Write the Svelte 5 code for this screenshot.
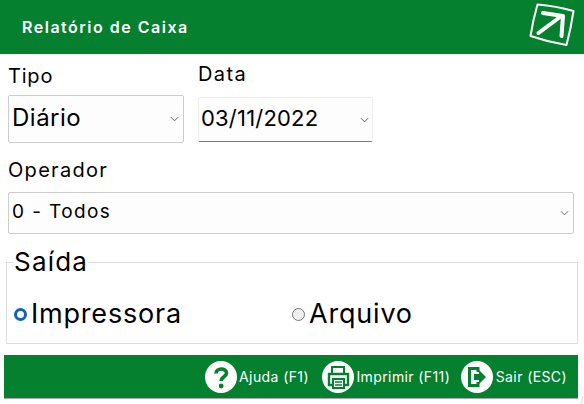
<script lang="ts">
	let tipo = $state("Diário");
	let saida = $state("impressora");
	const actions = [
		{ id: "help", label: "Ajuda (F1)" },
		{ id: "print", label: "Imprimir (F11)" },
		{ id: "exit", label: "Sair (ESC)" }
	];
</script>

<div class="page">
	<header class="topbar">
		<h1>Relatório de Caixa</h1>
		<svg class="logo" viewBox="529 3 46 46" width="46" height="46" aria-hidden="true">
			<path d="M537.5 4.5 Q556 6 573.5 11 Q571 28 566.5 45 Q548 42 530.5 36 Q533 20 537.5 4.5 Z" fill="none" stroke="#fff" stroke-width="2" stroke-linejoin="round" />
			<path d="M538.5 33 L560 17 M543 13 L563 16 L561.5 36" fill="none" stroke="#fff" stroke-width="4" stroke-linecap="round" stroke-linejoin="round" />
		</svg>
	</header>

	<div class="row">
		<div class="field tipo">
			<span class="label">Tipo</span>
			<div class="select big">
				<span>{tipo}</span>
				<svg class="chev" viewBox="0 0 10 6" width="9" height="6"><path d="M1 1 L5 5 L9 1" fill="none" stroke="#555" stroke-width="1" /></svg>
			</div>
		</div>
		<div class="field data">
			<span class="label">Data</span>
			<div class="select date">
				<span>03/11/2022</span>
				<svg class="chev" viewBox="0 0 10 6" width="9" height="6"><path d="M1 1 L5 5 L9 1" fill="none" stroke="#555" stroke-width="1" /></svg>
			</div>
		</div>
	</div>

	<div class="field operador">
		<span class="label">Operador</span>
		<div class="select wide">
			<span>0 - Todos</span>
			<svg class="chev" viewBox="0 0 10 6" width="9" height="6"><path d="M1 1 L5 5 L9 1" fill="none" stroke="#555" stroke-width="1" /></svg>
		</div>
	</div>

	<fieldset class="saida">
		<legend>Saída</legend>
		<div class="radios">
			<label class="radio">
				<span class="dot" class:on={saida === "impressora"}></span>Impressora
			</label>
			<label class="radio">
				<span class="dot" class:on={saida === "arquivo"}></span>Arquivo
			</label>
		</div>
	</fieldset>

	<footer class="actions">
		{#each actions as a}
			<div class="action {a.id}">
				<svg viewBox="0 0 32 32" width="32" height="32" aria-hidden="true">
					<circle cx="16" cy="16" r="16" fill="#fff" />
					{#if a.id === "help"}
						<path d="M11 12.5 C11 6.5 21.5 6.5 21.5 12 C21.5 16 16.2 15.5 16.2 20" fill="none" stroke="#05802f" stroke-width="3.6" />
						<circle cx="16.2" cy="25" r="2.4" fill="#05802f" />
					{:else if a.id === "print"}
						<path d="M10 12 V6 H22 V12" fill="none" stroke="#05802f" stroke-width="2" />
						<path d="M10 24 H7 V13 H26 V24 H22" fill="none" stroke="#05802f" stroke-width="2.4" />
						<path d="M11 18 H22 V27 H11 Z" fill="none" stroke="#05802f" stroke-width="2" />
						<path d="M13 21 H20 M13 24 H20" stroke="#05802f" stroke-width="1.4" />
					{:else}
						<path d="M17 11 V7.5 H8.5 V24.5 H17 V21" fill="none" stroke="#05802f" stroke-width="3" />
						<path d="M13 13 H18 V9 L25 16 L18 23 V19 H13 Z" fill="#05802f" />
					{/if}
				</svg>
				<span>{a.label}</span>
			</div>
		{/each}
	</footer>
</div>

<style>
	:global(body) {
		background: #fff;
		font-family: "Inter", "Liberation Sans", sans-serif;
		color: #000;
	}

	.page {
		position: relative;
		width: 584px;
		height: 404px;
		overflow: hidden;
		display: flex;
		flex-direction: column;
	}

	/* rounded edge of the window, bottom right */
	.page::after {
		content: "";
		position: absolute;
		right: 1px;
		bottom: -3px;
		width: 10px;
		height: 10px;
		border-right: 1px solid #ddd;
		border-bottom: 1px solid #ddd;
		border-radius: 0 0 8px 0;
	}

	.topbar {
		height: 54px;
		flex: none;
		background: #05802f;
		display: flex;
		align-items: flex-start;
		justify-content: space-between;
		padding: 3px 9px 0 22px;
		box-sizing: border-box;
	}

	h1 {
		margin: 15px 0 0;
		font-size: 16px;
		line-height: 19px;
		font-weight: 600;
		letter-spacing: 1.5px;
		color: #fff;
	}

	.row {
		display: flex;
		gap: 14px;
		padding: 9px 0 0 8px;
	}

	.label {
		display: block;
		font-size: 20px;
		line-height: 26px;
		letter-spacing: 0.8px;
	}

	.tipo {
		width: 176px;
	}

	.data {
		width: 175px;
		margin-top: -2px;
	}

	.data .label {
		letter-spacing: 1.4px;
	}

	.select {
		display: flex;
		align-items: center;
		justify-content: space-between;
		box-sizing: border-box;
		background: #fdfdfd;
		border: 1px solid #ccc;
		border-radius: 2px;
	}

	.select span {
		margin-bottom: 3px;
	}

	.big {
		height: 48px;
		margin-top: 6px;
		padding: 0 4px 0 3px;
		font-size: 24px;
		letter-spacing: 0.5px;
	}

	.date {
		height: 45px;
		margin-top: 10px;
		padding: 0 3px 0 2px;
		font-size: 22px;
		letter-spacing: 0.2px;
		border-color: #eee;
		border-bottom: 1px solid #777;
	}

	.operador {
		padding: 14px 10px 0 8px;
	}

	.operador .label {
		letter-spacing: 1.3px;
	}

	.wide {
		height: 42px;
		margin-top: 9px;
		padding: 0 4px 0 3px;
		font-size: 19px;
		letter-spacing: 1.4px;
	}

	.saida {
		margin: 14px 7px 0 6px;
		padding: 0 7px;
		height: 96px;
		border: 1px solid #ddd;
		box-sizing: border-box;
	}

	legend {
		padding: 0;
		font-size: 26px;
		line-height: 28px;
		letter-spacing: 1.2px;
	}

	.radios {
		display: flex;
		padding-top: 20px;
	}

	.radio {
		width: 278px;
		display: flex;
		align-items: center;
		font-size: 27px;
		line-height: 36px;
		letter-spacing: 0.8px;
	}

	.dot {
		width: 13px;
		height: 13px;
		box-sizing: border-box;
		border-radius: 50%;
		margin: 0 4px 0 0;
		background: #efefef;
		border: 1px solid #767676;
	}

	.dot.on {
		background: #fff;
		border: 3.5px solid #0f62b8;
	}

	.actions {
		margin: 11px 6px 0 4px;
		height: 44px;
		flex: none;
		box-sizing: border-box;
		background: #05802f;
		border-bottom: 1px solid #aaa;
		display: flex;
		align-items: center;
		justify-content: flex-end;
		gap: 11px;
		padding-right: 11px;
		color: #fff;
		font-size: 14px;
		letter-spacing: 0.4px;
	}

	.action {
		display: flex;
		align-items: center;
		gap: 2.5px;
	}

	.action.help {
		margin-right: 2px;
	}
</style>
